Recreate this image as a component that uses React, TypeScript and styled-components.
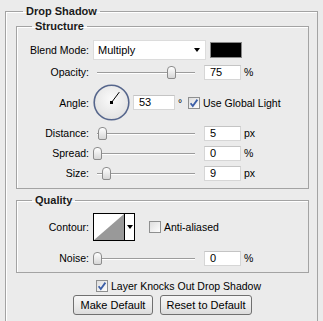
import React from "react";
import styled, { createGlobalStyle } from "styled-components";

const Global = createGlobalStyle`
  body {
    margin: 0;
    background: #ebebeb;
    font-family: "Liberation Sans", Arial, sans-serif;
    font-size: 10.5px;
    color: #000;
  }
`;

const Outer = styled.fieldset`
  margin: 5px 0 0 5px;
  width: 313px;
  height: 330px;
  box-sizing: border-box;
  padding: 3px 8px 0 10px;
  border: 1px solid #a3a3a3;
  box-shadow: inset 1px 1px 0 #fff;
`;

const Legend = styled.legend<{ $shift: number }>`
  margin-left: ${(p) => p.$shift}px;
  padding: 0 3px;
  font-weight: bold;
  font-size: 11px;
  line-height: 12px;
  color: #1a1a1a;
`;

const Group = styled.fieldset<{ $top: number; $pad: string }>`
  margin: ${(p) => p.$top}px 0 0 0;
  padding: ${(p) => p.$pad};
  border: 1px solid #a3a3a3;
  box-shadow: inset 1px 1px 0 #fff;
  display: flex;
  flex-direction: column;
`;

const Row = styled.div<{ $h: number; $gap?: number }>`
  display: flex;
  align-items: center;
  height: ${(p) => p.$h}px;
  margin-top: ${(p) => p.$gap ?? 4}px;
  &:first-of-type {
    margin-top: 0;
  }
`;

const Label = styled.span`
  width: 72px;
  margin-right: 4px;
  text-align: right;
  white-space: nowrap;
`;

const Select = styled.div`
  width: 113px;
  height: 20px;
  box-sizing: border-box;
  background: #fff;
  border: 1px solid #dcdcdc;
  display: flex;
  align-items: center;
  justify-content: space-between;
  padding: 0 5px 0 4px;
  font-size: 11px;
`;

const Caret = styled.span`
  width: 0;
  height: 0;
  border-left: 3.5px solid transparent;
  border-right: 3.5px solid transparent;
  border-top: 4px solid #000;
`;

const Swatch = styled.div`
  width: 32px;
  height: 16px;
  box-sizing: border-box;
  margin-left: 4px;
  background: #000;
  border: 1px solid #888;
`;

const SliderBox = styled.div`
  position: relative;
  width: 107px;
  height: 16px;
  margin-right: 4px;
`;

const Track = styled.div`
  position: absolute;
  left: 4px;
  right: 5px;
  top: 8px;
  height: 1px;
  background: #9c9c9c;
  box-shadow: 0 1px 0 #fff;
`;

const Thumb = styled.div`
  position: absolute;
  top: 2px;
  width: 9px;
  height: 13px;
  box-sizing: border-box;
  border: 1px solid #8c8c8c;
  border-radius: 4px 4px 2px 2px;
  background: linear-gradient(#ffffff, #d6d6d6);
`;

const NumBox = styled.div<{ $w?: number }>`
  width: ${(p) => p.$w ?? 37}px;
  height: 15px;
  box-sizing: border-box;
  background: #fff;
  border: 1px solid #d6d6d6;
  border-top-color: #c4c4c4;
  padding-left: 5px;
  line-height: 13px;
  font-size: 11px;
`;

const Unit = styled.span<{ $w?: number }>`
  margin-left: 3px;
  width: ${(p) => p.$w ?? 14}px;
`;

const DialBox = styled.div`
  width: 37px;
  height: 37px;
  margin-right: 3px;
`;

const CheckLabel = styled.label<{ $left?: number }>`
  display: flex;
  align-items: center;
  gap: 3px;
  margin-left: ${(p) => p.$left ?? 0}px;
  white-space: nowrap;
`;

const Contour = styled.div`
  width: 42px;
  height: 28px;
  box-sizing: border-box;
  border: 1px solid #000;
  display: flex;
  background: #fff;
`;

const ContourArrow = styled.div`
  flex: 1;
  border-left: 1px solid #000;
  display: flex;
  align-items: center;
  justify-content: center;
  & > span {
    border-left: 3px solid transparent;
    border-right: 3px solid transparent;
    border-top: 4px solid #000;
  }
`;

const KnockRow = styled.div`
  display: flex;
  height: 12px;
  align-items: center;
  margin: 7px 0 0 80px;
`;

const ButtonRow = styled.div`
  display: flex;
  gap: 7px;
  margin: 3px 0 0 57px;
`;

const Button = styled.button<{ $w: number }>`
  width: ${(p) => p.$w}px;
  height: 20px;
  border: 1px solid #707070;
  border-radius: 3px;
  background: linear-gradient(#f7f7f7 0%, #ececec 50%, #dcdcdc 100%);
  font-family: "Liberation Sans", Arial, sans-serif;
  font-size: 11px;
  color: #000;
  padding: 0;
`;

const Slider = ({ pct }: { pct: number }) => (
  <SliderBox>
    <Track />
    <Thumb style={{ left: Math.round(pct * 0.98) }} />
  </SliderBox>
);

const Check = ({ on }: { on: boolean }) => (
  <svg width="12" height="12" viewBox="0 0 12 12">
    <defs>
      <linearGradient id="cbg" x1="0" y1="0" x2="1" y2="1">
        <stop offset="0" stopColor="#dcdcdc" />
        <stop offset="1" stopColor="#ffffff" />
      </linearGradient>
    </defs>
    <rect x="0.5" y="0.5" width="11" height="11" fill="url(#cbg)" stroke="#8e8f8f" />
    {on && (
      <path d="M2.6 6.2 L4.8 9 L9.4 2.6" fill="none" stroke="#3c5fa8" strokeWidth="1.8" />
    )}
  </svg>
);

const Dial = ({ deg }: { deg: number }) => {
  const r = (deg * Math.PI) / 180;
  const x = 18.5 + 13 * Math.cos(r);
  const y = 18.5 - 13 * Math.sin(r);
  return (
    <DialBox>
      <svg width="37" height="37" viewBox="0 0 37 37">
        <defs>
          <radialGradient id="dg" cx="0.5" cy="0.4" r="0.6">
            <stop offset="0" stopColor="#fafafa" />
            <stop offset="1" stopColor="#e2e2e2" />
          </radialGradient>
        </defs>
        <circle cx="18.5" cy="18.5" r="17.3" fill="url(#dg)" stroke="#56668c" strokeWidth="1.6" />
        <line x1="18.5" y1="18.5" x2={x} y2={y} stroke="#000" strokeWidth="1" />
        <rect x="17" y="17" width="3" height="3" fill="#000" />
      </svg>
    </DialBox>
  );
};

const App = () => {
  return (
    <>
      <Global />
      <Outer>
        <Legend $shift={7}>Drop Shadow</Legend>
        <Group $top={0} $pad="8px 0 7px 0">
          <Legend $shift={15}>Structure</Legend>
          <Row $h={20}>
            <Label>Blend Mode:</Label>
            <Select>
              Multiply
              <Caret />
            </Select>
            <Swatch />
          </Row>
          <Row $h={16}>
            <Label>Opacity:</Label>
            <Slider pct={75} />
            <NumBox>75</NumBox>
            <Unit>%</Unit>
          </Row>
          <Row $h={37}>
            <Label>Angle:</Label>
            <Dial deg={53} />
            <NumBox $w={42}>53</NumBox>
            <Unit $w={10}>°</Unit>
            <CheckLabel>
              <Check on />
              Use Global Light
            </CheckLabel>
          </Row>
          <Row $h={16}>
            <Label>Distance:</Label>
            <Slider pct={5} />
            <NumBox>5</NumBox>
            <Unit>px</Unit>
          </Row>
          <Row $h={16}>
            <Label>Spread:</Label>
            <Slider pct={0} />
            <NumBox>0</NumBox>
            <Unit>%</Unit>
          </Row>
          <Row $h={16}>
            <Label>Size:</Label>
            <Slider pct={9} />
            <NumBox>9</NumBox>
            <Unit>px</Unit>
          </Row>
        </Group>
        <Group $top={5} $pad="7px 0 6px 0">
          <Legend $shift={15}>Quality</Legend>
          <Row $h={28}>
            <Label>Contour:</Label>
            <Contour>
              <svg width="30" height="26" viewBox="0 0 30 26">
                <polygon points="0,26 30,0 30,26" fill="#999" />
              </svg>
              <ContourArrow>
                <span />
              </ContourArrow>
            </Contour>
            <CheckLabel $left={14}>
              <Check on={false} />
              Anti-aliased
            </CheckLabel>
          </Row>
          <Row $h={16} $gap={9}>
            <Label>Noise:</Label>
            <Slider pct={0} />
            <NumBox>0</NumBox>
            <Unit>%</Unit>
          </Row>
        </Group>
        <KnockRow>
          <CheckLabel>
            <Check on />
            Layer Knocks Out Drop Shadow
          </CheckLabel>
        </KnockRow>
        <ButtonRow>
          <Button $w={80}>Make Default</Button>
          <Button $w={92}>Reset to Default</Button>
        </ButtonRow>
      </Outer>
    </>
  );
};

export default App;
